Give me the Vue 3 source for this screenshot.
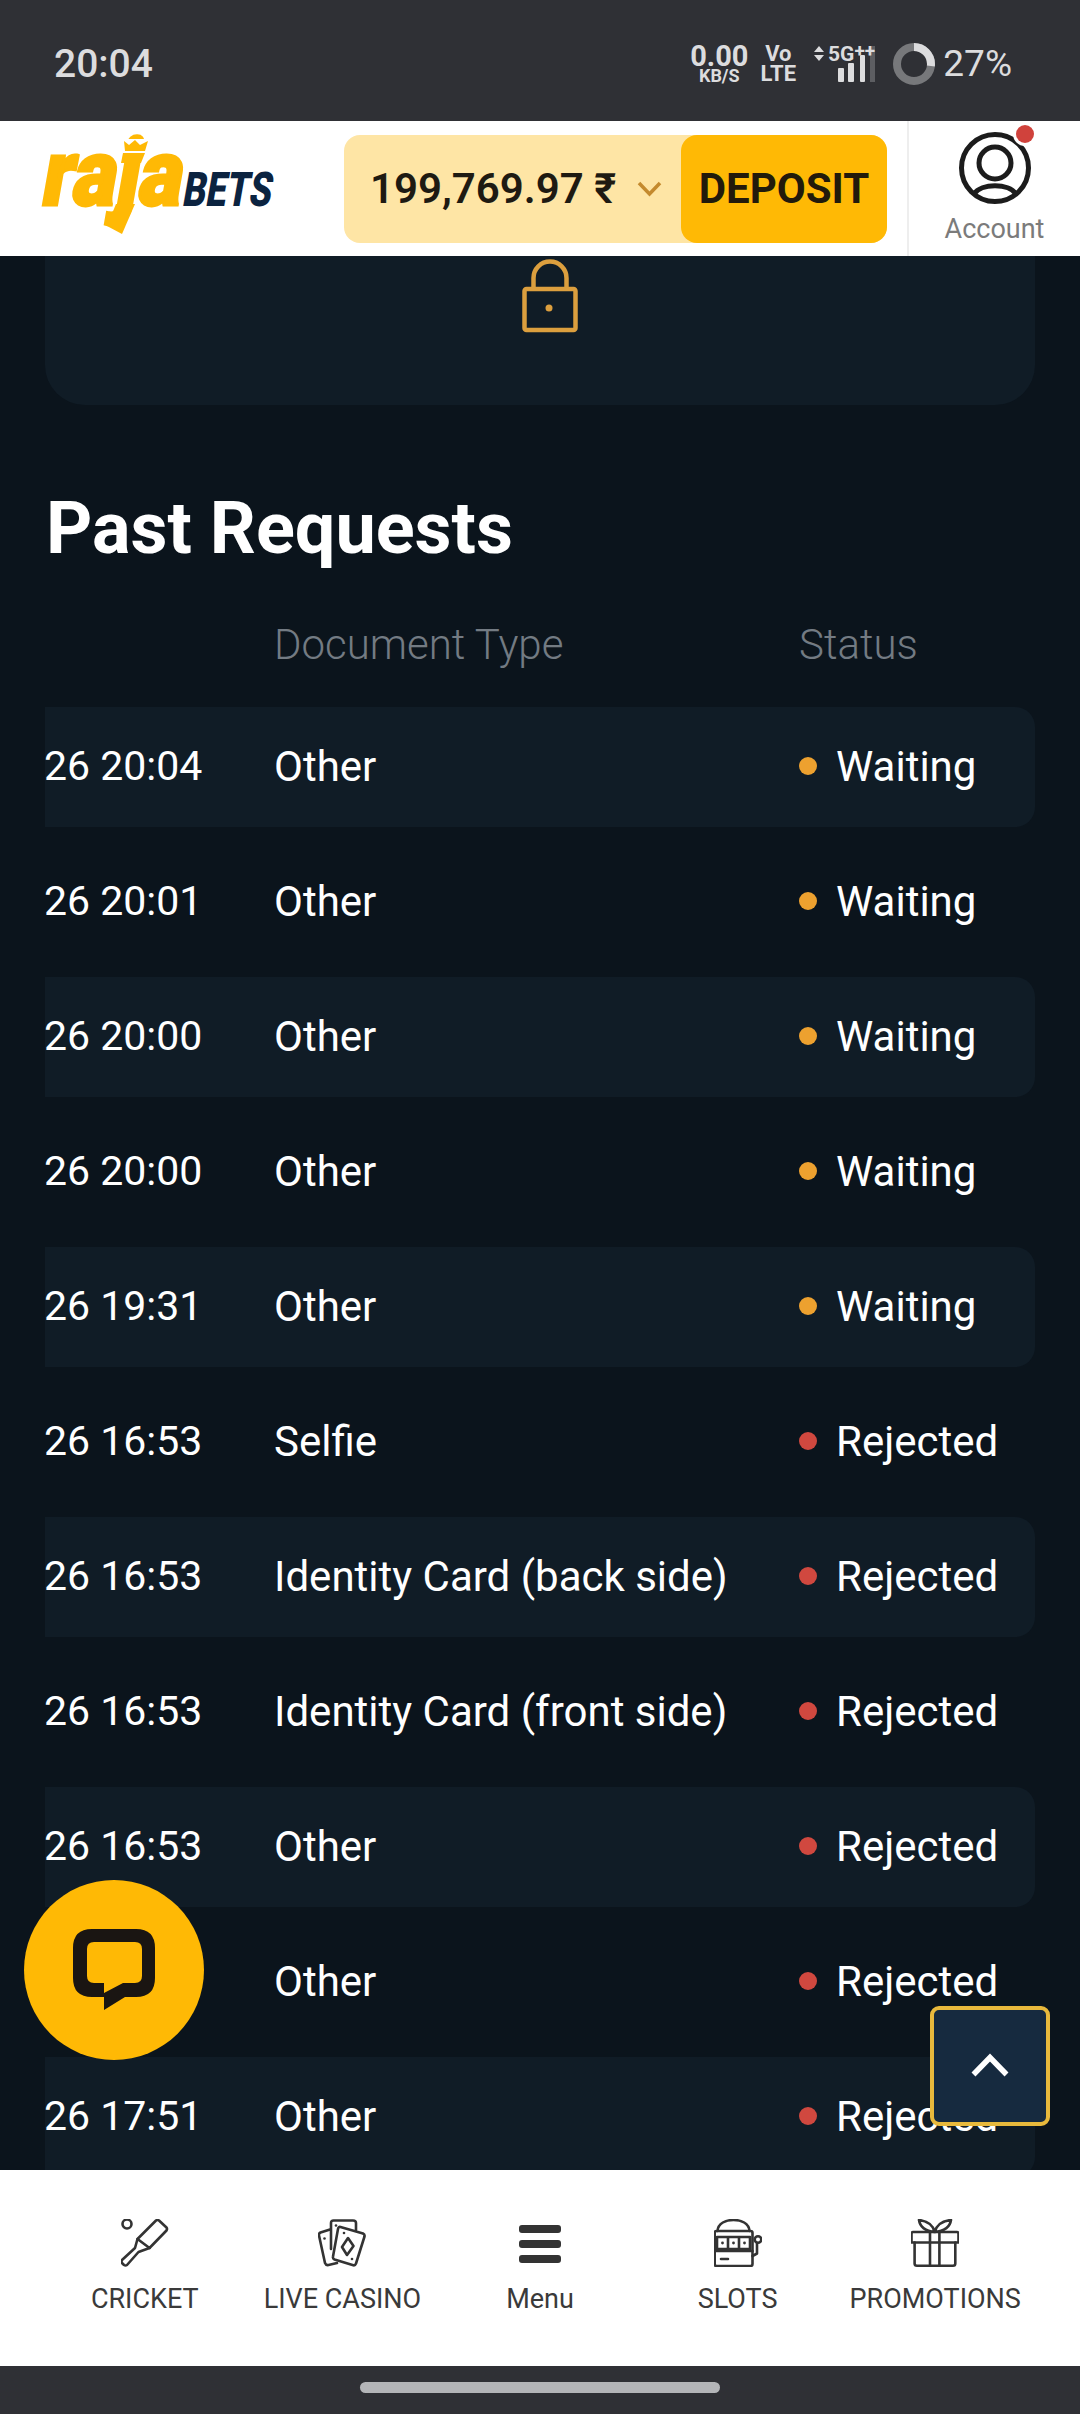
<template>
  <div class="page">
    <!-- status bar -->
    <div class="status-bar">
      <span class="time">20:04</span>
      <div class="status-right">
        <div class="net">
          <span class="net-value">0.00</span>
          <span class="net-unit">KB/S</span>
        </div>
        <div class="volte">
          <span>Vo</span>
          <span>LTE</span>
        </div>
        <svg class="signal" width="61" height="40" viewBox="0 0 61 40">
          <path d="M5 2 L10 8 H0 Z M5 17 L10 11 H0 Z" fill="#dcdcde" />
          <rect x="24" y="24" width="6" height="14" rx="1" fill="#dcdcde" />
          <rect x="34" y="19" width="6" height="19" rx="1" fill="#dcdcde" />
          <rect x="46" y="11" width="5" height="27" rx="1" fill="#dcdcde" />
          <rect x="56" y="2" width="5" height="36" fill="#5d5e62" />
          <text x="14" y="17" class="signal-text">5G<tspan dy="-4" class="signal-plus">++</tspan></text>
        </svg>
        <svg class="ring" width="42" height="42" viewBox="0 0 42 42">
          <circle cx="21" cy="21" r="17" fill="none" stroke="#77787b" stroke-width="8" />
          <circle cx="21" cy="21" r="17" fill="none" stroke="#dcdcde" stroke-width="8" pathLength="100" stroke-dasharray="27 73" transform="rotate(-90 21 21)" />
        </svg>
        <span class="percent">27%</span>
      </div>
    </div>

    <!-- site header -->
    <header class="site-header">
      <svg class="logo" width="240" height="100" viewBox="0 0 240 100">
        <text x="0" y="66" class="logo-raja" textLength="140" lengthAdjust="spacingAndGlyphs" transform="skewX(-10) translate(11 0)">raja</text>
        <rect x="74" y="0" width="36" height="14" fill="#fff" />
        <polygon points="84,2 89,6 95,1 100,6 108,2 105,12 85,12" fill="#ffb905" />
        <polygon points="83,14 105,14 101,24 81,24" fill="#ffb905" />
        <polygon points="76,65 95,65 82,95 67,87" fill="#ffb905" />
        <text x="0" y="67" class="logo-bets" textLength="89" lengthAdjust="spacingAndGlyphs" transform="skewX(-10) translate(153 0)">BETS</text>
      </svg>
      <div class="balance">
        <span class="balance-amount">199,769.97 ₹</span>
        <svg class="balance-chevron" width="25" height="16" viewBox="0 0 25 16">
          <path d="M2 2 L12.5 13 L23 2" fill="none" stroke="#c48a2e" stroke-width="3.5" />
        </svg>
        <button class="deposit">DEPOSIT</button>
      </div>
      <div class="account">
        <div class="account-icon">
          <svg width="80" height="80" viewBox="0 0 80 80">
            <circle cx="40" cy="40" r="33.5" fill="none" stroke="#1c1c1c" stroke-width="5" />
            <circle cx="40" cy="35" r="16" fill="none" stroke="#1c1c1c" stroke-width="5" />
            <path d="M19 66 C26 55 54 55 61 66" fill="none" stroke="#1c1c1c" stroke-width="5" />
          </svg>
          <span class="account-dot"></span>
        </div>
        <span class="account-label">Account</span>
      </div>
    </header>

    <!-- scrolled content -->
    <main class="content">
      <div class="upload-card">
        <svg width="56" height="76" viewBox="0 0 56 76">
          <path d="M11.5 30 V20 a16.5 16.5 0 0 1 33 0 V30" fill="none" stroke="#dc9f3e" stroke-width="4.5" />
          <rect x="2.5" y="31" width="51" height="41" rx="2" fill="none" stroke="#dc9f3e" stroke-width="4.5" />
          <circle cx="27" cy="50" r="3.5" fill="#dc9f3e" />
        </svg>
      </div>

      <h2 class="title">Past Requests</h2>

      <div class="table">
        <div class="table-head">
          <span></span>
          <span>Document Type</span>
          <span>Status</span>
        </div>
        <div v-for="(row, index) in rows" :key="index" class="table-row" :class="{ striped: index % 2 === 0 }">
          <span class="date">{{ row.date }}</span>
          <span>{{ row.type }}</span>
          <span class="status">
            <i class="dot" :class="row.status === 'Waiting' ? 'waiting' : 'rejected'"></i>
            {{ row.status }}
          </span>
        </div>
      </div>

      <button class="to-top">
        <svg width="38" height="24" viewBox="0 0 38 24">
          <path d="M2.5 21.5 L19 4.5 L35.5 21.5" fill="none" stroke="#fff" stroke-width="5.5" />
        </svg>
      </button>

      <button class="chat">
        <svg width="84" height="84" viewBox="0 0 84 84">
          <path fill-rule="evenodd" fill="#1a1512" d="M20 1 H64 Q83 1 83 20 V50 Q83 69 64 69 H53 L32 82 V69 H20 Q1 69 1 50 V20 Q1 1 20 1 Z M22 14 Q15 14 15 21 V48 Q15 55 22 55 H32 V65 L51 55 H63 Q70 55 70 48 V21 Q70 14 63 14 Z" />
        </svg>
      </button>
    </main>

    <!-- bottom navigation -->
    <nav class="bottom-nav">
      <a class="nav-item">
        <svg width="48" height="48" viewBox="0 0 48 48" class="nav-icon">
          <circle cx="6" cy="5" r="4.5" />
          <path d="M35 1.5 Q36.5 0.5 38 1.5 L45.5 8.5 Q46.5 10 45.5 11.5 L28.5 29 L16.5 20 Z" />
          <path d="M16.5 20 L14 29 L1 41 Q0 42.5 1 44 L3 46 Q4.5 47 6 46 L17.5 33 L28.5 29" />
        </svg>
        <span>CRICKET</span>
      </a>
      <a class="nav-item">
        <svg width="48" height="48" viewBox="0 0 48 48" class="nav-icon">
          <path d="M12 10.5 L2.5 13.5 Q0.5 14.5 1 16.5 L7 44 Q8 46.5 10.5 46 L19 44" />
          <path d="M13 30 V4 Q13 1.5 15.5 1.5 H35 Q38 1.5 38 4 V11" />
          <path class="card-front" d="M22.5 8 L45 14.5 Q47 15.5 46.5 17.5 L38 44.5 Q37 47 34.5 46 L16.5 40.5 Q14.5 39.5 15 37.5 L20 10 Q20.5 7.5 22.5 8 Z" />
          <path d="M30 19 L35.5 27 L29 36 L24 28 Z" />
          <circle cx="6.5" cy="19.5" r="1.3" class="pip" />
          <circle cx="18" cy="6.5" r="1.3" class="pip" />
          <circle cx="26" cy="14" r="1.3" class="pip" />
          <circle cx="34" cy="40" r="1.3" class="pip" />
        </svg>
        <span>LIVE CASINO</span>
      </a>
      <a class="nav-item">
        <div class="menu-icon">
          <i></i><i></i><i></i>
        </div>
        <span>Menu</span>
      </a>
      <a class="nav-item">
        <svg width="48" height="48" viewBox="0 0 48 48" class="nav-icon">
          <path d="M3.5 12 C4 4 12 1 19.5 1 C27 1 35 4 35.5 12" />
          <path d="M2.5 12 H36.5 Q38.5 12 38.5 14 V45 Q38.5 47 36.5 47 H2.5 Q0.7 47 0.7 45 V14 Q0.7 12 2.5 12 Z" />
          <path d="M0.7 32 H38.5 M3 18 H36 V30 H3 Z M14 18 V30 M25 18 V30 M7 40 H14" />
          <circle cx="8.5" cy="24" r="1.4" class="pip" />
          <circle cx="19.5" cy="24" r="1.4" class="pip" />
          <circle cx="30.5" cy="24" r="1.4" class="pip" />
          <path d="M38.5 37 L43 34.5 V24" />
          <circle cx="44" cy="20.5" r="3.3" />
        </svg>
        <span>SLOTS</span>
      </a>
      <a class="nav-item">
        <svg width="48" height="48" viewBox="0 0 48 48" class="nav-icon">
          <path d="M2 13 H46 Q47.5 13 47.5 15 V23.5 H0.5 V15 Q0.5 13 2 13 Z" />
          <path d="M3.6 23.5 V44.5 Q3.6 46.7 6 46.7 H42 Q44.3 46.7 44.3 44.5 V23.5" />
          <path d="M19 13 V46.7 M28.4 13 V46.7" />
          <path d="M23.7 13 C15 12 9 8 8 1 C16 2 22 6 23.7 13 C25.5 6 31 2 40 1 C39 8 33 12 23.7 13" />
        </svg>
        <span>PROMOTIONS</span>
      </a>
    </nav>

    <!-- android gesture bar -->
    <div class="gesture-bar">
      <span class="gesture-handle"></span>
    </div>
  </div>
</template>

<script setup>
const rows = [
  { date: '26 20:04', type: 'Other', status: 'Waiting' },
  { date: '26 20:01', type: 'Other', status: 'Waiting' },
  { date: '26 20:00', type: 'Other', status: 'Waiting' },
  { date: '26 20:00', type: 'Other', status: 'Waiting' },
  { date: '26 19:31', type: 'Other', status: 'Waiting' },
  { date: '26 16:53', type: 'Selfie', status: 'Rejected' },
  { date: '26 16:53', type: 'Identity Card (back side)', status: 'Rejected' },
  { date: '26 16:53', type: 'Identity Card (front side)', status: 'Rejected' },
  { date: '26 16:53', type: 'Other', status: 'Rejected' },
  { date: '26 16:53', type: 'Other', status: 'Rejected' },
  { date: '26 17:51', type: 'Other', status: 'Rejected' }
]
</script>

<style>
html,
body {
  margin: 0;
  background: #0b141c;
}
</style>

<style scoped>
.page {
  width: 1080px;
  height: 2414px;
  display: flex;
  flex-direction: column;
  overflow: hidden;
  font-family: Roboto, "Liberation Sans", sans-serif;
  background: #0b141c;
}

.status-bar {
  height: 121px;
  flex: none;
  padding: 6px 68px 0 54px;
  box-sizing: border-box;
  display: flex;
  align-items: center;
  justify-content: space-between;
  background: #2f3035;
  color: #dcdcde;
}
.time {
  font-size: 39px;
  font-weight: 500;
}
.status-right {
  display: flex;
  align-items: center;
}
.net {
  display: flex;
  flex-direction: column;
  align-items: center;
  width: 60px;
}
.net-value {
  font-size: 29px;
  line-height: 24px;
  font-weight: 700;
}
.net-unit {
  font-size: 18px;
  line-height: 15px;
  font-weight: 700;
}
.volte {
  margin-left: 12px;
  width: 34px;
  display: flex;
  flex-direction: column;
  align-items: center;
  font-size: 22px;
  line-height: 20px;
  font-weight: 700;
}
.signal {
  margin-left: 19px;
  overflow: visible;
}
.signal-text {
  font-size: 21px;
  font-weight: 700;
  fill: #dcdcde;
}
.signal-plus {
  font-size: 19px;
}
.ring {
  margin-left: 18px;
}
.percent {
  margin-left: 8px;
  font-size: 37px;
}

.site-header {
  height: 135px;
  flex: none;
  display: flex;
  align-items: center;
  padding-left: 40px;
  box-sizing: border-box;
  background: #fff;
}
.logo {
  flex: none;
  overflow: visible;
}
.logo-raja {
  font-size: 93px;
  font-weight: 900;
  fill: #ffb905;
  stroke: #ffb905;
  stroke-width: 3;
  stroke-linejoin: miter;
}
.logo-bets {
  font-size: 48px;
  font-weight: 900;
  fill: #0b2340;
}
.balance {
  margin-left: 64px;
  width: 543px;
  height: 108px;
  flex: none;
  display: flex;
  align-items: center;
  padding-left: 26px;
  box-sizing: border-box;
  border-radius: 16px;
  background: #fee5a5;
}
.balance-amount {
  font-size: 42px;
  font-weight: 600;
  color: #1e1a12;
  white-space: nowrap;
}
.balance-chevron {
  margin-left: 21px;
}
.deposit {
  margin-left: auto;
  width: 206px;
  height: 108px;
  border: 0;
  border-radius: 16px;
  background: #ffb905;
  font-family: inherit;
  font-size: 42px;
  font-weight: 700;
  color: #221a0b;
  padding: 0;
}
.account {
  margin-left: 20px;
  align-self: stretch;
  flex: 1;
  display: flex;
  flex-direction: column;
  align-items: center;
  padding-top: 7px;
  border-left: 2px solid #eee;
}
.account-icon {
  position: relative;
  width: 80px;
  height: 80px;
}
.account-icon svg {
  display: block;
}
.account-dot {
  position: absolute;
  top: -3px;
  right: 1px;
  width: 18px;
  height: 18px;
  border-radius: 50%;
  background: #d0423c;
  box-shadow: 0 0 0 3px #fff;
}
.account-label {
  margin-top: 5px;
  font-size: 27px;
  line-height: 32px;
  color: #7b7b7b;
}

.content {
  position: relative;
  flex: 1;
  min-height: 0;
  overflow: hidden;
}
.upload-card {
  height: 149px;
  margin: 0 45px;
  display: flex;
  justify-content: center;
  padding: 2px 0 0 20px;
  box-sizing: border-box;
  border-radius: 0 0 40px 40px;
  background: #101c26;
}
.upload-card svg {
  display: block;
}
.title {
  margin: 82px 0 0 46px;
  font-size: 72px;
  line-height: 84px;
  font-weight: 700;
  color: #fff;
}
.table {
  margin: 43px 45px 0;
  overflow: hidden;
}
.table-head,
.table-row {
  display: grid;
  grid-template-columns: 229px 525px 1fr;
  align-items: center;
  font-size: 42px;
}
.table-head {
  height: 60px;
  margin-bottom: 33px;
  font-weight: 300;
  color: #737b83;
}
.table-row {
  height: 120px;
  margin-bottom: 15px;
  padding-bottom: 2px;
  box-sizing: border-box;
  color: #fff;
  white-space: nowrap;
}
.table-row.striped {
  background: #101c26;
  border-radius: 0 20px 20px 0;
}
.date {
  margin-left: -1px;
  font-size: 41px;
}
.status {
  display: flex;
  align-items: center;
  gap: 19px;
}
.dot {
  width: 18px;
  height: 18px;
  border-radius: 50%;
}
.dot.waiting {
  background: #eda12f;
}
.dot.rejected {
  background: #d0483f;
}

.to-top {
  position: absolute;
  left: 930px;
  top: 1750px;
  width: 120px;
  height: 120px;
  padding: 0;
  box-sizing: border-box;
  display: flex;
  align-items: center;
  justify-content: center;
  border: 4px solid #e8b93c;
  border-radius: 9px;
  background: #162a3f;
}
.to-top svg {
  margin-top: -2px;
}
.chat {
  position: absolute;
  left: 24px;
  top: 1624px;
  width: 180px;
  height: 180px;
  padding: 0;
  border: 0;
  border-radius: 50%;
  display: flex;
  align-items: center;
  justify-content: center;
  background: #ffb905;
}

.bottom-nav {
  height: 196px;
  flex: none;
  display: grid;
  grid-template-columns: repeat(5, 1fr);
  padding: 49px 46px 0;
  box-sizing: border-box;
  background: #fff;
}
.nav-item {
  display: flex;
  flex-direction: column;
  align-items: center;
  font-size: 27px;
  line-height: 32px;
  color: #3a3a3a;
  white-space: nowrap;
}
.nav-item span {
  margin-top: 16px;
}
.nav-icon {
  display: block;
  fill: none;
  stroke: #333;
  stroke-width: 2.6;
  stroke-linejoin: round;
  stroke-linecap: round;
}
.nav-icon .card-front {
  fill: #fff;
}
.nav-icon .pip {
  fill: #333;
  stroke: none;
}
.menu-icon {
  width: 42px;
  height: 48px;
  padding: 6px 0 0;
  box-sizing: border-box;
  display: flex;
  flex-direction: column;
  gap: 7px;
}
.menu-icon i {
  height: 8px;
  border-radius: 3px;
  background: #333;
}

.gesture-bar {
  height: 48px;
  flex: none;
  display: flex;
  justify-content: center;
  padding-top: 16px;
  box-sizing: border-box;
  background: #2f3035;
}
.gesture-handle {
  width: 360px;
  height: 11px;
  border-radius: 6px;
  background: #b4b5b8;
}
</style>
